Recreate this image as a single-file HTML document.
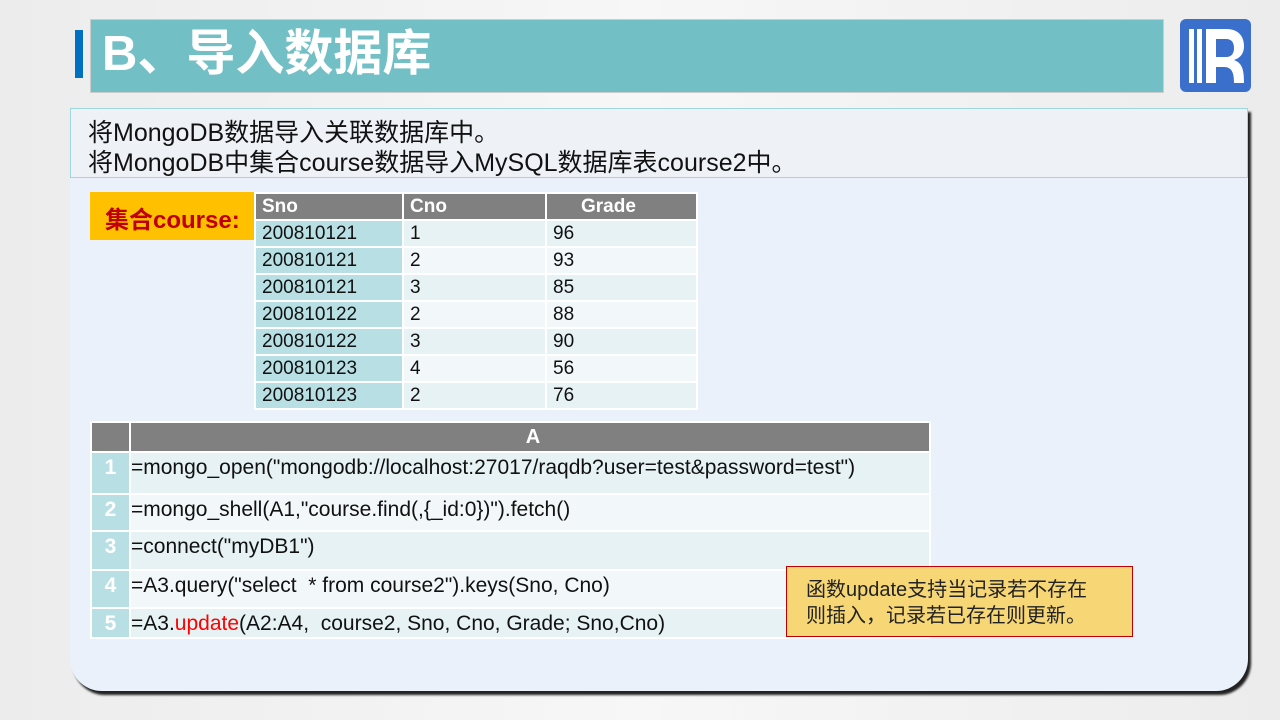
<!DOCTYPE html>
<html><head><meta charset="utf-8"><style>
body{margin:0;width:1280px;height:720px;background:linear-gradient(90deg,#ececec,#f7f7f7 50%,#ececec);position:relative;overflow:hidden;font-family:"Liberation Sans","Noto Sans CJK SC",sans-serif}
.abs{position:absolute}
.panel{left:70px;top:108px;width:1178px;height:583px;background:#eaf1fb;border-radius:0 0 32px 32px;box-shadow:3px 4px 2px #222;}
.head{left:70px;top:108px;width:1178px;height:70px;background:#eef2f7;border:1px solid #9fd6db;box-sizing:border-box}
.t{font-size:25px;color:#111;left:88px;line-height:30px}
table{border-collapse:collapse;position:absolute}
td{padding:0 0 0 6px;font-size:19px;color:#111;border:2px solid #fff;box-sizing:border-box}
.c td{font-size:21px}
.c td.n{background:#b8e0e4;color:#fff;font-weight:bold;text-align:center;padding:3px 0 0}
.c td.x{padding:3px 0 0 0}
</style></head><body>
<div class="abs" style="left:75px;top:30px;width:8px;height:48px;background:#0070c0"></div>
<div class="abs" style="left:90px;top:19px;width:1074px;height:74px;background:#72bfc6;border:1px solid #ccc;box-sizing:border-box"></div>
<div class="abs" style="left:102px;top:20px;font-size:49px;font-weight:bold;color:#fff;line-height:68px">B、导入数据库</div>
<svg class="abs" style="left:1180px;top:19px" width="71" height="73" viewBox="0 0 71 73"><rect width="71" height="73" rx="6" fill="#3b6fcc"/><rect x="9" y="10" width="5" height="54" fill="#fff"/><rect x="17" y="10" width="5" height="54" fill="#fff"/><path d="M26 10h20c14 0 18 9 18 17s-4 12-10 14c8 3 10 9 10 23h-10c0-10-2-16-10-16h-8v16h-10z M36 20v18h10c6 0 8-4 8-9s-2-9-8-9z" fill="#fff" fill-rule="evenodd"/></svg>
<div class="abs panel"></div>
<div class="abs head"></div>
<div class="abs t" style="top:118px">将MongoDB数据导入关联数据库中。</div>
<div class="abs t" style="top:148px">将MongoDB中集合course数据导入MySQL数据库表course2中。</div>
<div class="abs" style="left:90px;top:192px;width:165px;height:48px;background:#ffc000;color:#c00000;font-weight:bold;font-size:24px;line-height:58px;text-indent:15px">集合course:</div>
<table style="left:254px;top:192px;width:444px">
<tr style="height:27px;background:#808080"><td style="color:#fff;font-weight:bold;width:148px">Sno</td><td style="color:#fff;font-weight:bold;width:143px">Cno</td><td style="color:#fff;font-weight:bold;padding-left:34px">Grade</td></tr>
<tr style="height:27px;background:#e6f2f3"><td style="background:#b8e0e4">200810121</td><td>1</td><td>96</td></tr>
<tr style="height:27px;background:#f2f8fa"><td style="background:#b8e0e4">200810121</td><td>2</td><td>93</td></tr>
<tr style="height:27px;background:#e6f2f3"><td style="background:#b8e0e4">200810121</td><td>3</td><td>85</td></tr>
<tr style="height:27px;background:#f2f8fa"><td style="background:#b8e0e4">200810122</td><td>2</td><td>88</td></tr>
<tr style="height:27px;background:#e6f2f3"><td style="background:#b8e0e4">200810122</td><td>3</td><td>90</td></tr>
<tr style="height:27px;background:#f2f8fa"><td style="background:#b8e0e4">200810123</td><td>4</td><td>56</td></tr>
<tr style="height:27px;background:#e6f2f3"><td style="background:#b8e0e4">200810123</td><td>2</td><td>76</td></tr>
</table>
<table class="c" style="left:90px;top:421px;width:841px">
<tr style="height:30px;background:#808080"><td style="width:39px"></td><td style="color:#fff;font-weight:bold;text-align:center;font-size:20px">A</td></tr>
<tr style="height:42px;background:#e6f2f3;vertical-align:top"><td class="n">1</td><td class="x">=mongo_open("mongodb://localhost:27017/raqdb?user=test&amp;password=test")</td></tr>
<tr style="height:37px;background:#f2f8fa;vertical-align:top"><td class="n">2</td><td class="x">=mongo_shell(A1,"course.find(,{_id:0})").fetch()</td></tr>
<tr style="height:39px;background:#e6f2f3;vertical-align:top"><td class="n">3</td><td class="x">=connect("myDB1")</td></tr>
<tr style="height:38px;background:#f2f8fa;vertical-align:top"><td class="n">4</td><td class="x">=A3.query("select &nbsp;* from course2").keys(Sno, Cno)</td></tr>
<tr style="height:30px;background:#e6f2f3;vertical-align:top"><td class="n">5</td><td class="x">=A3.<span style="color:#f00">update</span>(A2:A4, &nbsp;course2, Sno, Cno, Grade; Sno,Cno)</td></tr>
</table>
<div class="abs" style="left:786px;top:566px;width:347px;height:71px;background:#f7d775;border:1px solid #c00000;box-sizing:border-box;padding:10px 0 0 19px;font-size:20px;line-height:26px;color:#222">函数update支持当记录若不存在<br>则插入，记录若已存在则更新。</div>
</body></html>
